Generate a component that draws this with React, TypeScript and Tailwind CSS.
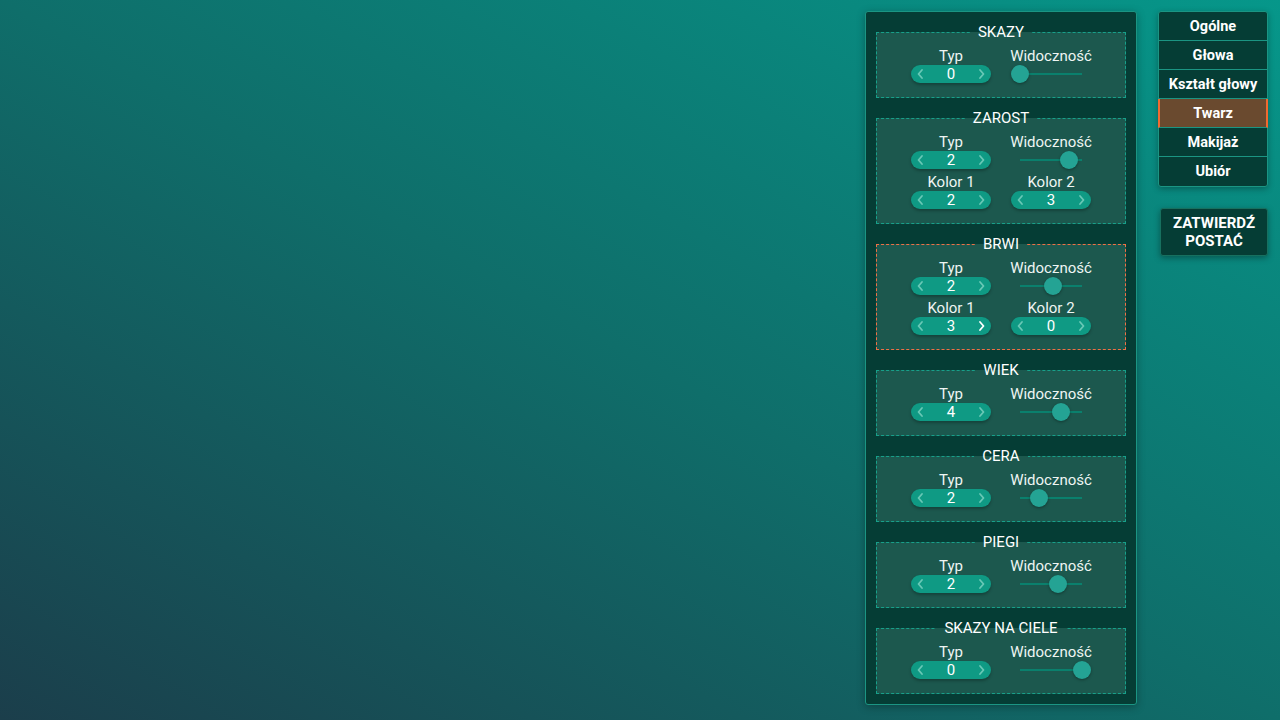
import React from "react";

type Row = { kind: "stepper"; label: string; value: number; hotRight?: boolean } | { kind: "slider"; label: string; pct: number };

type Section = { title: string; rows: Row[][]; active?: boolean };

const sections: Section[] = [
  { title: "SKAZY", rows: [[{ kind: "stepper", label: "Typ", value: 0 }, { kind: "slider", label: "Widoczność", pct: 0 }]] },
  {
    title: "ZAROST",
    rows: [
      [{ kind: "stepper", label: "Typ", value: 2 }, { kind: "slider", label: "Widoczność", pct: 0.79 }],
      [{ kind: "stepper", label: "Kolor 1", value: 2 }, { kind: "stepper", label: "Kolor 2", value: 3 }],
    ],
  },
  {
    title: "BRWI",
    active: true,
    rows: [
      [{ kind: "stepper", label: "Typ", value: 2 }, { kind: "slider", label: "Widoczność", pct: 0.53 }],
      [{ kind: "stepper", label: "Kolor 1", value: 3, hotRight: true }, { kind: "stepper", label: "Kolor 2", value: 0 }],
    ],
  },
  { title: "WIEK", rows: [[{ kind: "stepper", label: "Typ", value: 4 }, { kind: "slider", label: "Widoczność", pct: 0.66 }]] },
  { title: "CERA", rows: [[{ kind: "stepper", label: "Typ", value: 2 }, { kind: "slider", label: "Widoczność", pct: 0.31 }]] },
  { title: "PIEGI", rows: [[{ kind: "stepper", label: "Typ", value: 2 }, { kind: "slider", label: "Widoczność", pct: 0.61 }]] },
  { title: "SKAZY NA CIELE", rows: [[{ kind: "stepper", label: "Typ", value: 0 }, { kind: "slider", label: "Widoczność", pct: 1 }]] },
];

const nav = ["Ogólne", "Głowa", "Kształt głowy", "Twarz", "Makijaż", "Ubiór"];

function Chevron({ dir, hot }: { dir: "l" | "r"; hot?: boolean }) {
  return (
    <svg width="8" height="12" viewBox="0 0 8 12" fill="none">
      <path
        d={dir === "l" ? "M6 2 L2.5 6 L6 10" : "M2 2 L5.5 6 L2 10"}
        stroke={hot ? "#ffffff" : "#69c8b6"}
        strokeWidth="1.8"
        strokeLinecap="round"
        strokeLinejoin="round"
      />
    </svg>
  );
}

function Stepper({ value, hotRight }: { value: number; hotRight?: boolean }) {
  return (
    <div className="w-[80px] h-[18px] rounded-full bg-[#0f9a84] shadow-[0_2px_3px_rgba(0,0,0,0.25)] flex items-center justify-between px-[5px]">
      <Chevron dir="l" />
      <span className="text-[15px] leading-[18px] text-white">{value}</span>
      <Chevron dir="r" hot={hotRight} />
    </div>
  );
}

function Slider({ pct }: { pct: number }) {
  return (
    <div className="relative w-[62px] h-[18px] flex items-center">
      <div className="w-full h-[2px] bg-[#0a806d]" />
      <div
        className="absolute top-0 w-[18px] h-[18px] rounded-full bg-[#24a394] shadow-[0_1px_3px_rgba(0,0,0,0.35)]"
        style={{ left: pct * 62 - 9 }}
      />
    </div>
  );
}

function Cell({ row }: { row: Row }) {
  return (
    <div className="flex flex-col items-center">
      <div className="text-[15px] leading-[18px] text-[#eef5f3] whitespace-nowrap">{row.label}</div>
      {row.kind === "stepper" ? <Stepper value={row.value} hotRight={row.hotRight} /> : <Slider pct={row.pct} />}
    </div>
  );
}

export default function App() {
  return (
    <div
      className="w-[1280px] h-[720px] overflow-hidden flex justify-end items-start pt-[11px] pr-[12px] gap-[21px] bg-[linear-gradient(to_top_right,#1b3e4b_0%,#0f6e6a_50%,#06978a_100%)]"
      style={{ fontFamily: "Roboto, 'Noto Sans', sans-serif" }}
    >
      <div className="w-[272px] rounded-[3px] border border-[#1b9583] bg-[#053d35] p-[10px] flex flex-col gap-[10px] shadow-[0_2px_8px_rgba(0,0,0,0.3)]">
        {sections.map((s) => (
          <fieldset
            key={s.title}
            className={`border ${s.active ? "border-[#f07045]" : "border-[#17a08a]"} border-dashed bg-[#1c584e] pb-[14px] pt-[5px] flex flex-col gap-[4px]`}
          >
            <legend className="mx-auto px-[8px] text-[15px] leading-[20px] text-white">{s.title}</legend>
            {s.rows.map((r, i) => (
              <div key={i} className="grid grid-cols-[100px_100px] justify-center">
                <Cell row={r[0]} />
                <Cell row={r[1]} />
              </div>
            ))}
          </fieldset>
        ))}
      </div>
      <div className="flex flex-col items-end gap-[21px]">
        <div className="w-[110px] rounded-[3px] border border-[#1b9583] bg-[#053d35] flex flex-col shadow-[0_2px_6px_rgba(0,0,0,0.3)]">
          {nav.map((n, i) => (
            <div
              key={n}
              className={`h-[29px] pt-[1px] flex items-center justify-center text-[14.5px] font-bold text-white whitespace-nowrap ${
                i < nav.length - 1 ? "border-b border-[#1b9583]" : ""
              } ${n === "Twarz" ? "bg-[#6a4a2f] border-x-2 border-x-[#f06a30] -mx-[1px]" : ""}`}
            >
              {n}
            </div>
          ))}
        </div>
        <div className="w-[108px] h-[48px] rounded-[3px] border border-[#17705f] bg-[#053d35] flex items-center justify-center text-center text-[15px] leading-[18px] font-bold text-white shadow-[0_2px_6px_rgba(0,0,0,0.35)]">
          ZATWIERDŹ
          <br />
          POSTAĆ
        </div>
      </div>
    </div>
  );
}
